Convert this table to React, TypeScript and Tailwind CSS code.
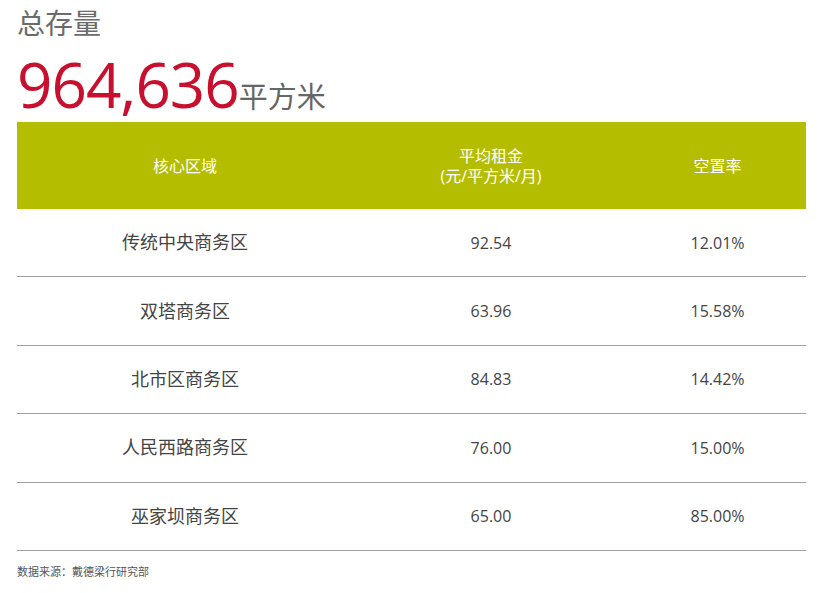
const rows = [
  { area: '传统中央商务区', rent: '92.54', vacancy: '12.01%' },
  { area: '双塔商务区', rent: '63.96', vacancy: '15.58%' },
  { area: '北市区商务区', rent: '84.83', vacancy: '14.42%' },
  { area: '人民西路商务区', rent: '76.00', vacancy: '15.00%' },
  { area: '巫家坝商务区', rent: '65.00', vacancy: '85.00%' },
];

const cjk = "font-['Open_Sans','Noto_Sans_CJK_SC',sans-serif]";

export default function App() {
  return (
    <div className={`w-[838px] h-[593px] bg-white overflow-hidden ${cjk}`}>
      <div className="pl-[17px] pt-[3px]">
        <div className="text-[28px] leading-[40px] text-[#6b6b6b]">总存量</div>
        <div className="flex items-baseline mt-[3px] h-[76px]">
          <span className="text-[62px] leading-[76px] text-[#c8102e] tracking-[-1px]">964,636</span>
          <span className="text-[29px] text-[#666]">平方米</span>
        </div>
      </div>

      <div className="ml-[17px] w-[789px]">
        <div className="grid grid-cols-[336px_276px_1fr] h-[87px] bg-[#b5bd00] text-white text-[16px] leading-[20px] items-center text-center">
          <div>核心区域</div>
          <div>
            平均租金
            <br />
            (元/平方米/月)
          </div>
          <div>空置率</div>
        </div>

        {rows.map((r) => (
          <div
            key={r.area}
            className="grid grid-cols-[336px_276px_1fr] h-[68.4px] items-center text-center text-[#444] border-b-[1.5px] border-[#a0a0a0]"
          >
            <div className="text-[18px]">{r.area}</div>
            <div className="text-[16px]">{r.rent}</div>
            <div className="text-[16px]">{r.vacancy}</div>
          </div>
        ))}
      </div>

      <div className="pl-[17px] pt-[13px] text-[11px] text-[#555]">数据来源：戴德梁行研究部</div>
    </div>
  );
}
